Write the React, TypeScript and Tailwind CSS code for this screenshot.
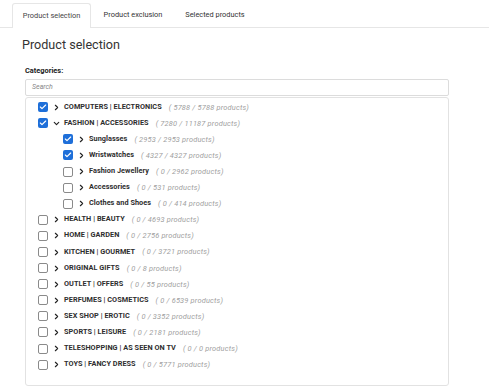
import { Check, ChevronRight, ChevronDown } from "lucide-react";

type Cat = {
  name: string;
  sel: number;
  total: number;
  checked?: boolean;
  open?: boolean;
  level?: number;
};

const categories: Cat[] = [
  { name: "COMPUTERS | ELECTRONICS", sel: 5788, total: 5788, checked: true },
  { name: "FASHION | ACCESSORIES", sel: 7280, total: 11187, checked: true, open: true },
  { name: "Sunglasses", sel: 2953, total: 2953, checked: true, level: 1 },
  { name: "Wristwatches", sel: 4327, total: 4327, checked: true, level: 1 },
  { name: "Fashion Jewellery", sel: 0, total: 2962, level: 1 },
  { name: "Accessories", sel: 0, total: 531, level: 1 },
  { name: "Clothes and Shoes", sel: 0, total: 414, level: 1 },
  { name: "HEALTH | BEAUTY", sel: 0, total: 4693 },
  { name: "HOME | GARDEN", sel: 0, total: 2756 },
  { name: "KITCHEN | GOURMET", sel: 0, total: 3721 },
  { name: "ORIGINAL GIFTS", sel: 0, total: 8 },
  { name: "OUTLET | OFFERS", sel: 0, total: 55 },
  { name: "PERFUMES | COSMETICS", sel: 0, total: 6539 },
  { name: "SEX SHOP | EROTIC", sel: 0, total: 3352 },
  { name: "SPORTS | LEISURE", sel: 0, total: 2181 },
  { name: "TELESHOPPING | AS SEEN ON TV", sel: 0, total: 0 },
  { name: "TOYS | FANCY DRESS", sel: 0, total: 5771 },
];

function Box({ checked }: { checked?: boolean }) {
  if (checked) {
    return (
      <span className="flex items-center justify-center w-[10px] h-[10px] rounded-[2px] bg-[#1e6fd9]">
        <Check size={8} strokeWidth={3.5} color="#fff" />
      </span>
    );
  }
  return <span className="block w-[10px] h-[10px] rounded-[2px] border border-[#8a8a8a] bg-white" />;
}

function Row({ c }: { c: Cat }) {
  return (
    <div className={`flex items-center h-[16.1px] ${c.level ? "pl-[37px]" : "pl-[12px]"}`}>
      <Box checked={c.checked} />
      <span className="w-[16px] flex justify-center text-[#222]">
        {c.open ? <ChevronDown size={9} strokeWidth={3} /> : <ChevronRight size={9} strokeWidth={3} />}
      </span>
      <span className="font-bold text-[7.3px] text-[#2e2e2e] tracking-[0.05px]">{c.name}</span>
      <span className="ml-[7px] italic text-[7.4px] text-[#a0a0a0] tracking-[0.2px]">
        ( {c.sel} / {c.total} products)
      </span>
    </div>
  );
}

export default function App() {
  return (
    <div className="w-[489px] h-[390px] bg-white overflow-hidden font-['Roboto',sans-serif] text-[#333]">
      <div className="flex h-[28px] pl-[12px] pt-[3px] border-b border-[#e6e6e6]">
        <div className="w-[79px] border border-b-0 border-[#e6e6e6] rounded-t-[3px] bg-white -mb-px flex items-center justify-center text-[7.4px] text-[#444]">
          Product selection
        </div>
        <div className="w-[84px] flex items-center justify-center text-[7.4px] text-[#333]">Product exclusion</div>
        <div className="w-[80px] flex items-center justify-center text-[7.4px] text-[#333]">Selected products</div>
      </div>
      <div className="pl-[22px] pr-[40px]">
        <h1 className="mt-[8px] text-[12.6px] leading-[18px] text-[#333]">Product selection</h1>
        <div className="mt-[11px] ml-[3px] font-bold text-[7.4px] text-[#222]">Categories:</div>
        <div className="ml-[3px] mt-[3px] h-[17px] border border-[#dcdcdc] rounded-[2px] flex items-center pl-[6px] italic text-[7px] text-[#888]">
          Search
        </div>
        <div className="ml-[3px] mt-[1px] h-[289px] border border-[#e2e2e2] rounded-[3px] pt-[1px]">
          {categories.map((c) => (
            <Row key={c.name} c={c} />
          ))}
        </div>
      </div>
    </div>
  );
}
